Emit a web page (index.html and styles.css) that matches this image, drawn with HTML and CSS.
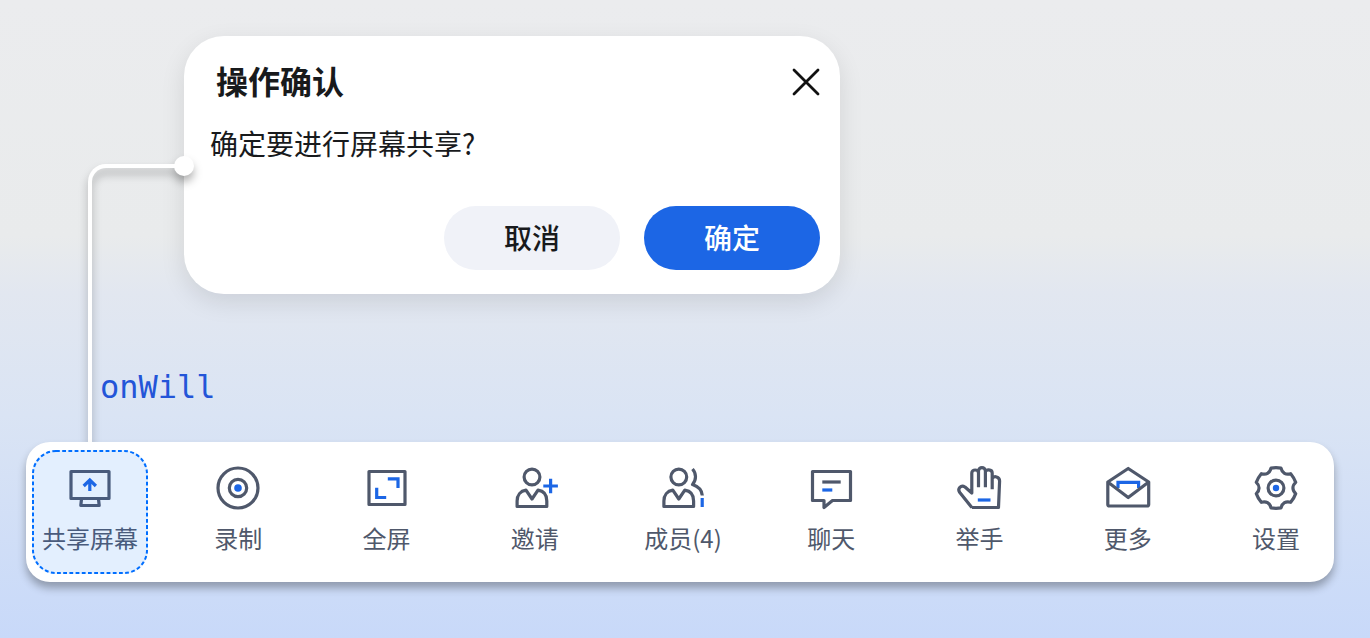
FILE: index.html
```html
<!DOCTYPE html>
<html lang="zh-CN">
<head>
<meta charset="utf-8">
<meta name="viewport" content="width=device-width, initial-scale=1">
<title>操作确认</title>
<link rel="stylesheet" href="styles.css">
</head>
<body>
<main class="stage">
  <div class="flow">
    <section class="dialog" role="dialog" aria-labelledby="dialog-title">
      <header class="dialog-header">
        <h1 class="dialog-title" id="dialog-title">操作确认</h1>
        <button class="close" type="button" aria-label="关闭">
          <svg viewBox="0 0 32 32" width="32" height="32"><path d="M4 4L28 28M28 4L4 28"/></svg>
        </button>
      </header>
      <p class="dialog-text">确定要进行屏幕共享?</p>
      <div class="dialog-actions">
        <button class="btn" type="button">取消</button>
        <button class="btn btn-primary" type="button">确定</button>
      </div>
    </section>
    <p class="hook">onWill</p>
    <div class="connector"></div>
  </div>

  <nav class="toolbar">
    <button class="tool tool-active" type="button">
      <svg class="outline" viewBox="0 0 116 124" aria-hidden="true"><rect x="1" y="1" width="114" height="122" rx="23"/></svg>
      <svg class="icon" viewBox="0 0 48 48">
        <rect x="5" y="7.5" width="38" height="27"/>
        <path d="M15.5 35L14.8 41.5H33.2L32.5 35"/>
        <path class="accent" d="M23.8 27V16.5M17.7 22L23.8 16L29.9 22"/>
      </svg>
      <span>共享屏幕</span>
    </button>
    <button class="tool" type="button">
      <svg class="icon" viewBox="0 0 48 48">
        <circle cx="24" cy="24" r="20"/><circle cx="24" cy="24" r="8.7"/>
        <circle class="dot" cx="24" cy="24" r="3.8"/>
      </svg>
      <span>录制</span>
    </button>
    <button class="tool" type="button">
      <svg class="icon" viewBox="0 0 48 48">
        <rect x="6" y="7.5" width="36" height="33"/>
        <path class="accent" d="M24.8 14.8H35V24M13.7 23.7V33.5H23.2"/>
      </svg>
      <span>全屏</span>
    </button>
    <button class="tool" type="button">
      <svg class="icon" viewBox="0 0 48 48">
        <circle cx="21" cy="13" r="7.9"/>
        <path d="M6.1 42.5V37C6.1 31 9.5 27 15 26.2L21 35L27 26.2C32.5 27 35.8 31 35.8 37V42.5Z"/>
        <path class="accent" d="M32.3 22H46.9M39.6 14.7V29.3"/>
      </svg>
      <span>邀请</span>
    </button>
    <button class="tool" type="button">
      <svg class="icon" viewBox="0 0 48 48">
        <circle cx="19.8" cy="13" r="7.9"/>
        <path d="M4.9 42.5V37C4.9 31 8.3 27 13.8 26.2L19.8 35L25.8 26.2C31.3 27 34.6 31 34.6 37V42.5Z"/>
        <path d="M33.5 5C37.5 9.5 37.5 16 33.5 20.5C39.5 22.5 43 26.5 43.3 31.5"/>
        <path class="accent" d="M43.2 34V43"/>
      </svg>
      <span>成员(4)</span>
    </button>
    <button class="tool" type="button">
      <svg class="icon" viewBox="0 0 48 48">
        <path d="M5.5 7.5H43.5V36.5H25.5L17 43.5V36.5H5.5Z"/>
        <path d="M15.3 18H33.7"/>
        <path class="accent" d="M15.3 26H25.3"/>
      </svg>
      <span>聊天</span>
    </button>
    <button class="tool" type="button">
      <svg class="icon" viewBox="0 0 48 48">
        <path d="M15.8 43.5L3.8 28.5C1 24.500 5 20.500 9 23L15.800 29V9C15.800 5 22.500 5 22.500 9V23.300M22.500 9V7C22.500 2.500 29.400 2.500 29.400 7V23.300M29.400 8C29.400 5 36.200 5 36.200 9V25.300M36.200 14.500C38 11.500 43.600 12.500 43.600 17L42.500 43.500H15.800"/>
        <path class="accent" d="M21.8 36H34.5"/>
      </svg>
      <span>举手</span>
    </button>
    <button class="tool" type="button">
      <svg class="icon" viewBox="0 0 48 48">
        <path class="accent" d="M14 24V18.3H34.6V24"/>
        <path d="M3.8 18L24.2 4.5L44.7 18V40.5Q44.7 42 43 42H5.5Q3.8 42 3.8 40.5ZL24.2 33.5L44.7 18"/>
      </svg>
      <span>更多</span>
    </button>
    <button class="tool" type="button">
      <svg class="icon" viewBox="0 0 48 48">
        <path transform="translate(24 24)" d="M-5 -19.9Q0 -20.8 5 -19.9C6 -15 10 -12.7 14.7 -14.3Q18 -10.4 19.7 -5.6C16 -2.3 16 2.3 19.7 5.6Q18 10.4 14.7 14.3C10 12.7 6 15 5 19.9Q0 20.8 -5 19.9C-6 15 -10 12.7 -14.7 14.3Q-18 10.4 -19.7 5.6C-16 2.3 -16 -2.3 -19.7 -5.6Q-18 -10.4 -14.7 -14.3C-10 -12.7 -6 -15 -5 -19.9Z"/>
        <circle cx="24" cy="24" r="7.9"/><circle class="dot" cx="24" cy="24" r="3.2"/>
      </svg>
      <span>设置</span>
    </button>
  </nav>
</main>
</body>
</html>
```
FILE: styles.css
```css
* { box-sizing: border-box; }

body {
  margin: 0;
  min-height: 100vh;
  font-family: "Noto Sans CJK SC", sans-serif;
  color: #181a1c;
  background: linear-gradient(180deg, #ebecee 0%, #e9ebec 37%, #e2e7f0 46%, #dae4f4 65%, #c8d9f9 100%);
}

button {
  margin: 0;
  padding: 0;
  border: 0;
  background: none;
  color: inherit;
  font: inherit;
  cursor: pointer;
}

h1, p { margin: 0; }

.stage { padding: 36px 36px 56px 26px; }

.flow { position: relative; }

.dialog {
  max-width: 656px;
  margin-left: 158px;
  padding: 26px 20px 24px 26px;
  border-radius: 40px;
  background: #fff;
  box-shadow: 0 8px 24px rgba(0, 0, 0, 0.1);
}

.dialog-header {
  display: flex;
  align-items: flex-start;
  justify-content: space-between;
  padding-left: 6px;
  margin-right: -2px;
}

.dialog-title {
  font-size: 32px;
  font-weight: 700;
  line-height: 36px;
}

.close {
  display: flex;
  padding: 4px 0;
}

.close path {
  fill: none;
  stroke: #111;
  stroke-width: 2.8;
  stroke-linecap: round;
}

.dialog-text {
  margin-top: 21px;
  font-size: 28px;
  font-weight: 400;
  line-height: 40px;
}

.dialog-actions {
  display: flex;
  justify-content: flex-end;
  gap: 24px;
  margin-top: 43px;
}

.btn {
  width: 176px;
  height: 64px;
  padding-bottom: 2px;
  border-radius: 32px;
  background: #f0f2f8;
  font-size: 28px;
  font-weight: 500;
}

.btn-primary {
  background: #1c66e5;
  color: #fff;
}

.hook {
  padding: 73px 0 35px 74px;
  color: #2355d8;
  font-family: "DejaVu Sans Mono", monospace;
  font-size: 32px;
  line-height: 40px;
}

.connector {
  position: absolute;
  top: 128px;
  bottom: 0;
  left: 62px;
  width: 96px;
  border: solid #fff;
  border-width: 4px 0 0 4px;
  border-top-left-radius: 18px;
  filter: drop-shadow(0 6px 4px rgba(0, 0, 0, 0.3));
  pointer-events: none;
}

.connector::after {
  content: "";
  position: absolute;
  top: -12px;
  right: -10px;
  width: 20px;
  height: 20px;
  border-radius: 50%;
  background: #fff;
}

.toolbar {
  position: relative;
  display: flex;
  justify-content: space-between;
  padding: 8px 0 8px 6px;
  border-radius: 24px;
  background: #fff;
  box-shadow: 0 6px 8px rgba(0, 0, 0, 0.3);
}

.tool {
  position: relative;
  display: flex;
  flex-direction: column;
  align-items: center;
  gap: 10px;
  width: 116px;
  height: 124px;
  padding-top: 14px;
  border-radius: 24px;
  color: #4f586b;
  font-size: 24px;
  font-weight: 400;
  line-height: 32px;
  white-space: nowrap;
}

.tool-active {
  background: #e3effe;
  color: #495b7c;
}

.outline {
  position: absolute;
  inset: 0;
  fill: none;
  stroke: #006eff;
  stroke-width: 2;
  stroke-dasharray: 3.8 2.4;
}

.icon {
  width: 48px;
  height: 48px;
  fill: none;
  stroke: currentColor;
  stroke-width: 3.2;
  stroke-linejoin: round;
}

.icon .accent {
  stroke: #1c66e5;
  stroke-linejoin: miter;
}

.icon .dot {
  fill: #1c66e5;
  stroke: none;
}
```
